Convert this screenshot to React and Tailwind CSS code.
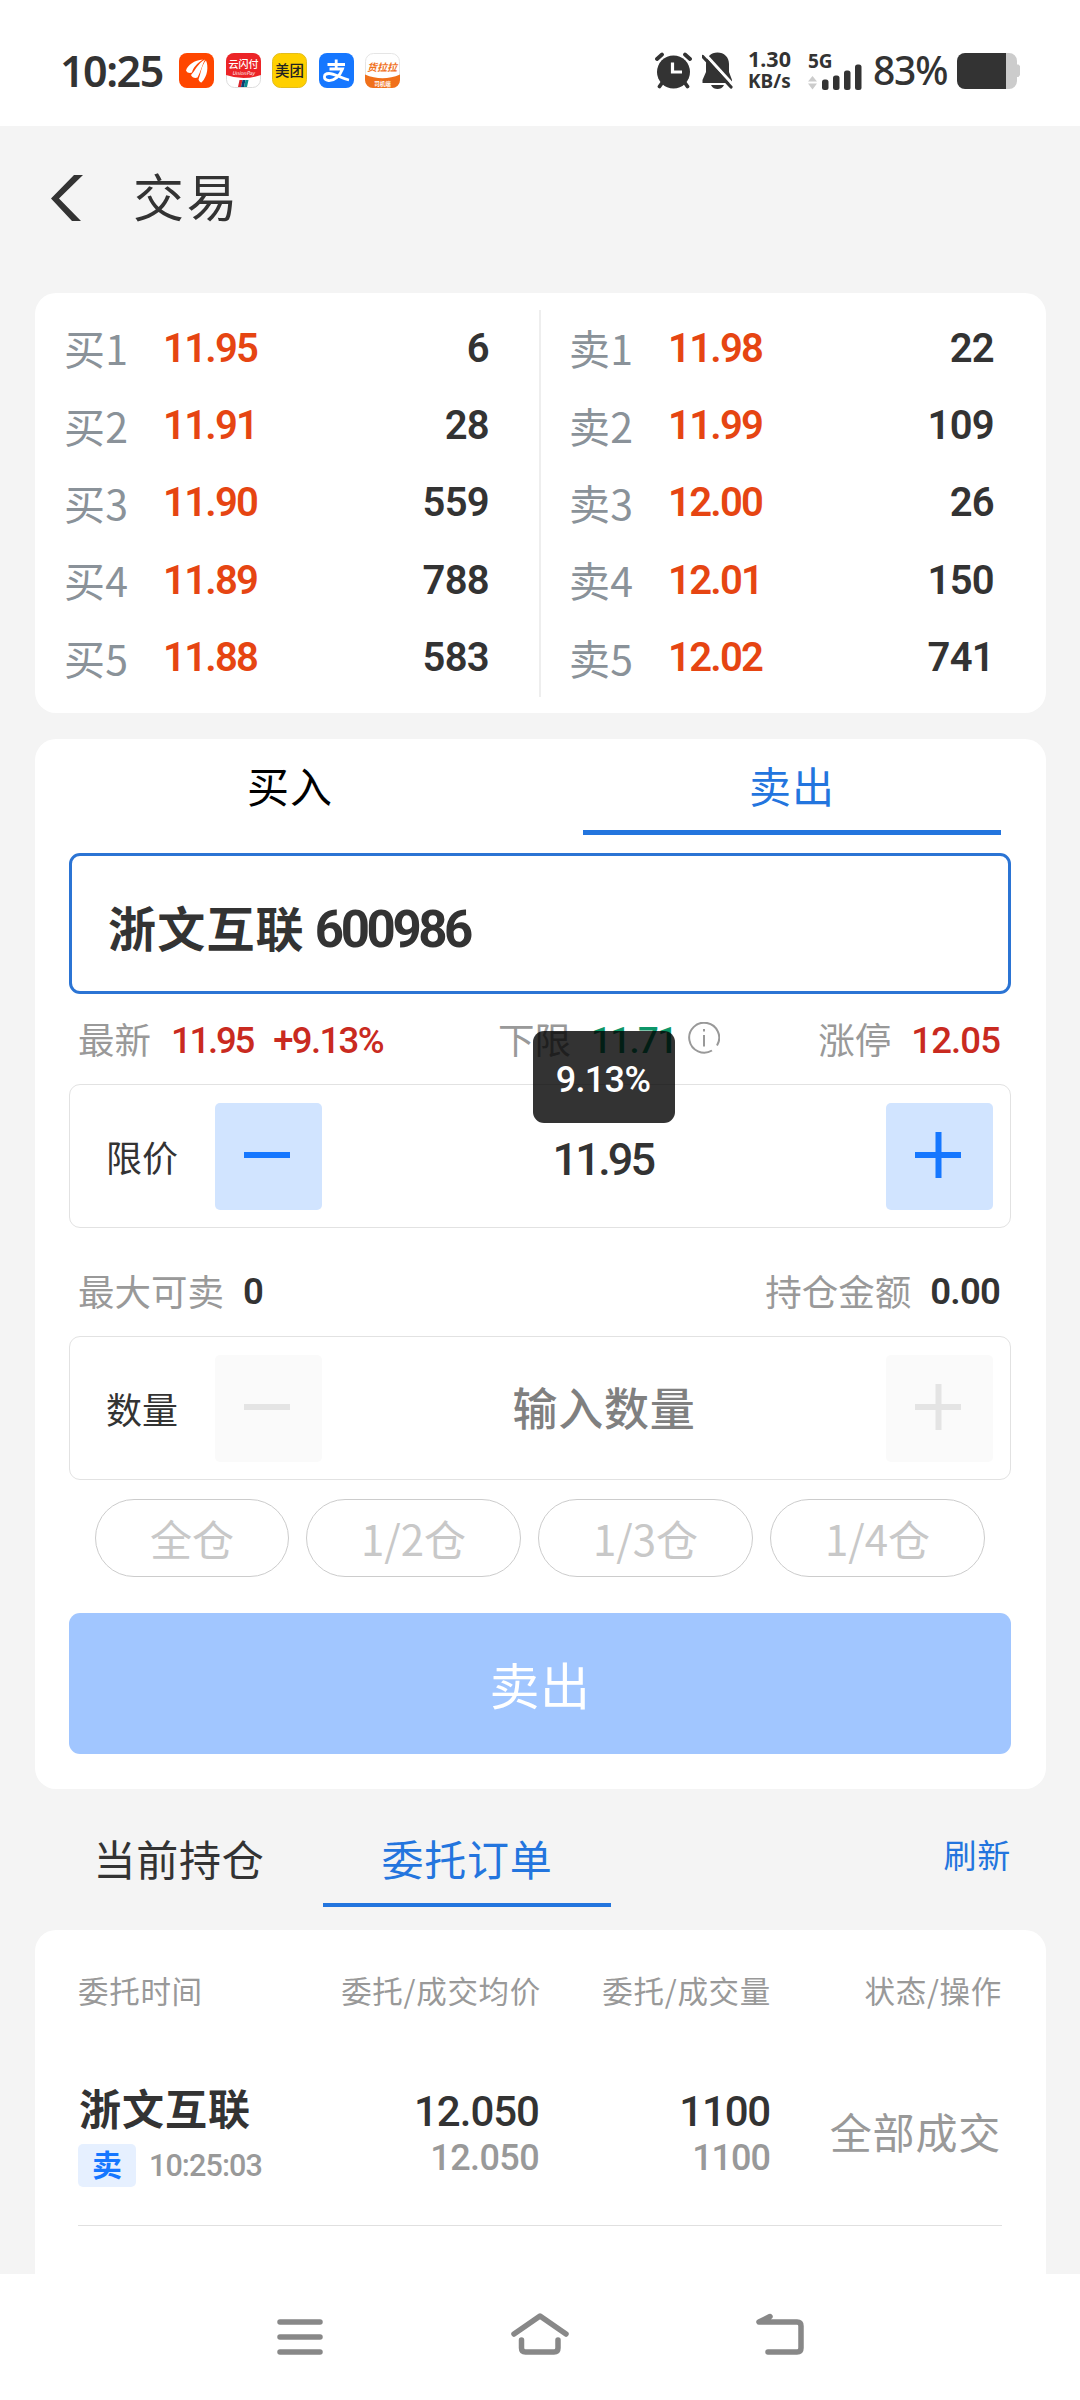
const CJK = "[font-family:'Noto_Sans_CJK_SC',sans-serif]";
const NUM = "[font-family:Roboto,'Noto_Sans_CJK_SC',sans-serif]";

const buys = [
  { label: "买1", price: "11.95", qty: "6" },
  { label: "买2", price: "11.91", qty: "28" },
  { label: "买3", price: "11.90", qty: "559" },
  { label: "买4", price: "11.89", qty: "788" },
  { label: "买5", price: "11.88", qty: "583" },
];

const sells = [
  { label: "卖1", price: "11.98", qty: "22" },
  { label: "卖2", price: "11.99", qty: "109" },
  { label: "卖3", price: "12.00", qty: "26" },
  { label: "卖4", price: "12.01", qty: "150" },
  { label: "卖5", price: "12.02", qty: "741" },
];

function AppIcons() {
  return (
    <div className="flex gap-[11.6px]">
      <svg className="size-[35px]" viewBox="0 0 35 35">
        <rect width="35" height="35" rx="8" fill="#ff4600" />
        <path d="M7 17.500C9 11.500 15 7.500 24 6.500C18 10 14 15 13 19.500C11 20.500 8 20 7 17.500Z" fill="#fff" />
        <path d="M12 22C16 18 19 10 26 6.500C23 12 22 18 18.500 24.500C16 25.500 13 24.500 12 22Z" fill="#fff" />
        <path d="M19.500 26.500C22 20 22.500 12 27 7.500C29.500 13 29 23 22.500 29.500C21 29.500 20 28 19.500 26.500Z" fill="#fff" />
      </svg>
      <svg className="size-[35px]" viewBox="0 0 35 35">
        <rect x=".5" y=".5" width="34" height="34" rx="8" fill="#fff" stroke="#ddd" />
        <path d="M8 0H27A8 8 0 0 1 35 8V22Q17.500 28 0 22V8A8 8 0 0 1 8 0Z" fill="#ec2427" />
        <text x="17.500" y="14.500" fontSize="10" fontWeight="500" fill="#fff" textAnchor="middle">云闪付</text>
        <text x="17.500" y="21.500" fontSize="5" fontStyle="italic" fill="#fff" textAnchor="middle">UnionPay</text>
        <path d="M13.500 27H16.500L15 34H12Z" fill="#d8232a" />
        <path d="M16.500 27H19.500L18 34H15Z" fill="#0b3f74" />
        <path d="M19.500 27H22.500L21 34H18Z" fill="#0b8a8f" />
      </svg>
      <svg className="size-[35px]" viewBox="0 0 35 35">
        <rect x=".5" y=".5" width="34" height="34" rx="8" fill="#ffd000" stroke="#e3bd1c" />
        <text x="17.500" y="23" fontSize="14.500" fontWeight="500" fill="#222" textAnchor="middle">美团</text>
      </svg>
      <svg className="size-[35px]" viewBox="0 0 35 35">
        <rect width="35" height="35" rx="8" fill="#1677ff" />
        <path d="M8.500 11.500H26M17.200 6.500V16M10.500 16H23.500C21 23 15 28 9.500 27.500C4 27 4 20.500 10 20.500C16 20.500 21 25 30 27" fill="none" stroke="#fff" strokeWidth="2.800" />
      </svg>
      <svg className="size-[35px]" viewBox="0 0 35 35">
        <rect x=".5" y=".5" width="34" height="34" rx="8" fill="#fff" stroke="#e5e5e5" />
        <path d="M0 21.500Q17.500 29 35 21.500V27A8 8 0 0 1 27 35H8A8 8 0 0 1 0 27Z" fill="#f0701a" />
        <text x="17" y="17.500" fontSize="10" fontStyle="italic" fontWeight="700" fill="#f0701a" textAnchor="middle">货拉拉</text>
        <text x="17.500" y="32.500" fontSize="5.500" fontWeight="700" fill="#fff" textAnchor="middle">司机端</text>
      </svg>
    </div>
  );
}

function StatusBar() {
  return (
    <div className="flex h-[126px] items-center justify-between bg-white pl-[60px] pr-[60px] pb-[15px] pt-[30px] text-[#333]">
      <div className="flex items-center">
        <span className="w-[119px] text-[43px] font-semibold leading-none tracking-[-1.5px] [font-family:'Noto_Sans',sans-serif]">10:25</span>
        <AppIcons />
      </div>
      <div className="flex items-center [font-family:'Noto_Sans',sans-serif]">
        <svg className="mr-[10px] h-[37px] w-[37px]" viewBox="0 0 37 37">
          <g stroke="#333" strokeWidth="3.800" strokeLinecap="round">
            <path d="M2 7L7 2.500M35 7L30 2.500M7 31L4.500 34.500M30 31L32.500 34.500" />
          </g>
          <circle cx="18.500" cy="20" r="16.500" fill="#333" />
          <path d="M17.500 10.500V20H27" fill="none" stroke="#fff" strokeWidth="3.200" />
        </svg>
        <svg className="mr-[15px] h-[37px] w-[31px]" viewBox="0 0 31 37">
          <path d="M15.500 .5C22 .5 27 5 27 12V20L30 28V31H.5V28L4 20V12C4 5 9 .5 15.500 .5Z" fill="#333" />
          <path d="M9 33H22C20.500 36 18 37 15.500 37C13 37 10.500 36 9 33Z" fill="#333" />
          <path d="M3 2L33 35" stroke="#fff" strokeWidth="3" />
          <path d="M.8 4.500L29 35" stroke="#333" strokeWidth="3.200" strokeLinecap="round" />
        </svg>
        <div className="flex w-[60px] flex-col pb-[2px] font-bold leading-none">
          <span className="text-[21.5px] leading-[22px]">1.30</span>
          <span className="text-[19px] leading-[22px]">KB/s</span>
        </div>
        <svg className="mr-[11px] h-[38px] w-[54px] overflow-visible" viewBox="0 0 54 38">
          <text x="0" y="15.500" fontSize="19" fontWeight="700" fill="#333">5G</text>
          <path d="M0 29.500L4.500 24L9 29.500ZM0 31.500L4.500 37.500L9 31.500Z" fill="#ccc" />
          <rect x="14" y="27.500" width="6.500" height="10.500" rx="2.500" fill="#333" />
          <rect x="25" y="23.500" width="6.500" height="14.500" rx="2.500" fill="#333" />
          <rect x="36" y="18.500" width="6.500" height="19.500" rx="2.500" fill="#333" />
          <rect x="47" y="12.500" width="6.500" height="25.500" rx="2.500" fill="#333" />
        </svg>
        <span className="mr-[9px] w-[75px] pb-[2px] text-[39px] font-medium leading-none tracking-[-1.2px]">83%</span>
        <svg className="h-[36px] w-[63px]" viewBox="0 0 63 36">
          <path d="M48 0H52A8 8 0 0 1 60 8V11.500H61.500L63 13V22L61.500 24H60V28A8 8 0 0 1 52 36H48Z" fill="#ccc" />
          <path d="M8 0H49V36H8A8 8 0 0 1 0 28V8A8 8 0 0 1 8 0Z" fill="#333" />
        </svg>
      </div>
    </div>
  );
}

function BookRow({ row }) {
  return (
    <div className="flex h-[77.4px] items-center leading-none">
      <span className="w-[99px] pb-[2px] text-[41px] tracking-[0.3px] text-[#8a9299]">{row.label}</span>
      <span className={`${NUM} flex-1 text-[40px] font-semibold tracking-[-1.7px] text-[#e64512]`}>{row.price}</span>
      <span className={`${NUM} text-[40px] font-semibold tracking-[-0.7px] text-[#333]`}>{row.qty}</span>
    </div>
  );
}

function OrderBook() {
  return (
    <div className="flex h-[420px] rounded-[21px] bg-white pt-[17px] pb-[16px]">
      <div className="w-[504px] pl-[29px] pr-[50px]">
        {buys.map((row) => (
          <BookRow key={row.label} row={row} />
        ))}
      </div>
      <div className="h-full w-[2px] bg-[#eee]" />
      <div className="flex-1 pl-[28px] pr-[52px]">
        {sells.map((row) => (
          <BookRow key={row.label} row={row} />
        ))}
      </div>
    </div>
  );
}

function StepButton({ plus, disabled }) {
  return (
    <button className={`mt-px flex size-[107px] items-center justify-center rounded-[5px] ${disabled ? "bg-[#fafafa] text-[#e4e4e4]" : "bg-[#d1e4ff] text-[#1677ff]"}`}>
      <svg className="mr-[3px] mb-[3px] size-[46px]" viewBox="0 0 46 46">
        <path d={plus ? "M0 23H46M23.500 0V46" : "M0 23H46"} stroke="currentColor" strokeWidth="6" />
      </svg>
    </button>
  );
}

function Stepper({ label, disabled, children }) {
  return (
    <div className="flex h-[144px] items-center rounded-[11px] border border-[#e2e2e2] pl-[36px] pr-[17px] leading-none">
      <span className="w-[109px] text-[36px] text-[#333]">{label}</span>
      <StepButton disabled={disabled} />
      <div className="flex flex-1 justify-center">{children}</div>
      <StepButton plus disabled={disabled} />
    </div>
  );
}

function TradeForm() {
  return (
    <div className="relative mt-[26px] h-[1050px] rounded-[21px] bg-white">
      <div className="flex pl-[4px] pr-[3px] text-[42px] leading-none tracking-[1px]">
        <div className="flex h-[96px] flex-1 items-center justify-center pb-[4px] text-black">买入</div>
        <div className="flex flex-1 justify-center">
          <div className="flex h-[96px] w-[418px] items-center justify-center border-b-[5px] border-[#2375de] text-[#2375de]">卖出</div>
        </div>
      </div>
      <div className="pl-[34px] pr-[35px]">
        <div className="mt-[18px] flex h-[141px] items-center rounded-[11px] border-[3px] border-[#2b74d4] pl-[36px] pt-[6px] font-bold leading-none text-[#333]">
          <span className="pb-[2px] text-[48px] tracking-[1.2px]">浙文互联</span>
          <span className={`${NUM} ml-[10px] pt-[5px] text-[51px] tracking-[-3.4px]`}>600986</span>
        </div>
        <div className="flex h-[90px] items-center justify-between pl-[9px] pr-[11px] pt-[4px] text-[36.500px] leading-none text-[#999]">
          <div className="flex items-center">
            <span className="pb-[3px]">最新</span>
            <span className={`${NUM} ml-[20px] font-medium tracking-[-2.2px] text-[#c92a20]`}>11.95</span>
            <span className={`${NUM} ml-[20px] font-medium tracking-[-1.6px] text-[#c92a20]`}>+9.13%</span>
          </div>
          <div className="ml-[16px] flex items-center">
            <span className="pb-[3px]">下限</span>
            <span className={`${NUM} ml-[20px] font-medium tracking-[-1.5px] text-[#0d9668]`}>11.71</span>
            <svg className="ml-[11px] mb-[6px] size-[32px]" viewBox="0 0 32 32" fill="none" stroke="#999" strokeWidth="2">
              <path d="M24 28.500A15 15 0 1 1 29 23.500" />
              <path d="M16 13V24.500M16 7V9.500" />
            </svg>
          </div>
          <div className="flex items-center">
            <span className="pb-[3px]">涨停</span>
            <span className={`${NUM} ml-[20px] font-medium tracking-[-0.9px] text-[#c92a20]`}>12.05</span>
          </div>
        </div>
        <Stepper label="限价">
          <span className={`${NUM} pt-[6px] pr-[2px] text-[45px] font-medium tracking-[-2.8px] text-[#333]`}>11.95</span>
        </Stepper>
        <div className="flex h-[108px] items-center justify-between pl-[9px] pr-[11px] pt-[20px] text-[36.500px] leading-none text-[#999]">
          <div className="flex items-center">
            <span className="pb-[2px]">最大可卖</span>
            <span className={`${NUM} ml-[19px] font-semibold text-[#333]`}>0</span>
          </div>
          <div className="flex items-center">
            <span className="pb-[2px]">持仓金额</span>
            <span className={`${NUM} ml-[19px] font-semibold tracking-[-0.8px] text-[#333]`}>0.00</span>
          </div>
        </div>
        <Stepper label="数量" disabled>
          <span className="pb-[4px] text-[45px] font-medium tracking-[0.7px] text-[#808080]">输入数量</span>
        </Stepper>
        <div className="mt-[19px] flex h-[78px] gap-[17px] pl-[26px] text-[42px] leading-none text-[#c8c8c8]">
          <button className="w-[194px] rounded-full border border-[#ccc]">全仓</button>
          <button className="w-[215px] rounded-full border border-[#ccc]">1/2仓</button>
          <button className="w-[215px] rounded-full border border-[#ccc]">1/3仓</button>
          <button className="w-[215px] rounded-full border border-[#ccc]">1/4仓</button>
        </div>
        <button className="mt-[36px] h-[141px] w-full rounded-[11px] bg-[#a1c6ff] pb-[2px] text-[50px] leading-none tracking-[0.5px] text-white">卖出</button>
      </div>
      <div className={`${NUM} absolute left-[498px] top-[292px] flex h-[92px] w-[142px] items-center justify-center rounded-[11px] bg-black/80 pt-[6px] pr-[2px] text-[36px] font-medium tracking-[-0.7px] text-white`}>
        9.13%
      </div>
    </div>
  );
}

function OrderTabs() {
  return (
    <div className="flex h-[141px] items-start text-[42px] leading-none tracking-[0.7px]">
      <div className="flex h-[118px] w-[288px] items-center justify-center pt-[20px] text-[#333]">当前持仓</div>
      <div className="flex h-[118px] w-[288px] items-center justify-center border-b-4 border-[#2375de] pt-[24px] text-[#2375de]">委托订单</div>
      <div className="ml-auto flex h-[118px] items-center pr-[35px] pt-[13px] text-[33px] text-[#2375de]">刷新</div>
    </div>
  );
}

function Orders() {
  return (
    <div className="h-[344px] rounded-t-[21px] bg-white pl-[43px] pr-[44px] leading-none">
      <div className="grid h-[120px] grid-cols-[240px_223px_230px_1fr] items-center text-[30.500px] tracking-[0.7px] text-[#999]">
        <span>委托时间</span>
        <span className="text-right">委托/成交均价</span>
        <span className="text-right">委托/成交量</span>
        <span className="text-right">状态/操作</span>
      </div>
      <div className="grid h-[176px] grid-cols-[240px_223px_230px_1fr] border-b border-[#e0e0e0]">
        <div className="pt-[36px]">
          <div className="pl-px text-[42px] font-bold tracking-[1px] text-[#333]">浙文互联</div>
          <div className="mt-[16px] flex items-center">
            <span className="flex h-[43px] w-[58px] items-center justify-center rounded-[5px] bg-[#e6f0ff] pb-[5px] text-[30px] font-bold text-[#1677ff]">卖</span>
            <span className={`${NUM} ml-[13px] pt-px text-[30.500px] font-medium tracking-[-0.9px] text-[#999]`}>10:25:03</span>
          </div>
        </div>
        <div className={`${NUM} flex flex-col items-end gap-[7px] pt-[41px] pr-[2px] font-medium`}>
          <span className="text-[42px] tracking-[-1px] text-[#333]">12.050</span>
          <span className="text-[36px] tracking-[-0.6px] text-[#999]">12.050</span>
        </div>
        <div className={`${NUM} flex flex-col items-end gap-[7px] pt-[41px] pr-px font-medium`}>
          <span className="text-[42px] tracking-[-1.2px] text-[#333]">1100</span>
          <span className="text-[36px] tracking-[-1px] text-[#999]">1100</span>
        </div>
        <div className="flex items-center justify-end pb-[14px] pr-px text-[42px] tracking-[0.8px] text-[#999]">全部成交</div>
      </div>
    </div>
  );
}

function NavBar() {
  return (
    <div className="flex h-[126px] justify-center gap-[180px] bg-white pt-[32px]">
      <svg className="size-[60px]" viewBox="0 0 60 60" fill="none" stroke="#888" strokeWidth="5.500" strokeLinecap="round">
        <path d="M10 16H50M10 31H50M10 46H50" />
      </svg>
      <svg className="size-[60px]" viewBox="0 0 60 60" fill="none" stroke="#888" strokeWidth="5.500" strokeLinecap="round" strokeLinejoin="round">
        <path d="M4 28L30 10L56 28M11.500 34V42Q11.500 46 15.500 46H44Q48 46 48 42V34" />
      </svg>
      <svg className="size-[60px]" viewBox="0 0 60 60" fill="none" stroke="#888" strokeWidth="5.500" strokeLinecap="round" strokeLinejoin="round">
        <path d="M20 10.500L9 16H47Q51 16 51 20V42Q51 46 47 46H18" />
        <path d="M20 10.500L9 16H20Z" fill="#888" stroke="none" />
      </svg>
    </div>
  );
}

export default function App() {
  return (
    <div className={`${CJK} h-[2400px] w-[1080px] overflow-hidden bg-[#f4f4f4]`}>
      <StatusBar />
      <div className="flex h-[142px] items-center pl-[51px]">
        <svg className="mt-[2px] h-[46px] w-[32px]" viewBox="0 0 32 46">
          <path d="M23 0H32L8 23.500L30 46H21L0 23.500Z" fill="#333" />
        </svg>
        <h1 className="ml-[50px] pb-[3px] text-[51px] leading-none tracking-[2.5px] text-[#333]">交易</h1>
      </div>
      <div className="pl-[35px] pr-[34px] pt-[25px]">
        <OrderBook />
        <TradeForm />
        <OrderTabs />
        <Orders />
      </div>
      <NavBar />
    </div>
  );
}
